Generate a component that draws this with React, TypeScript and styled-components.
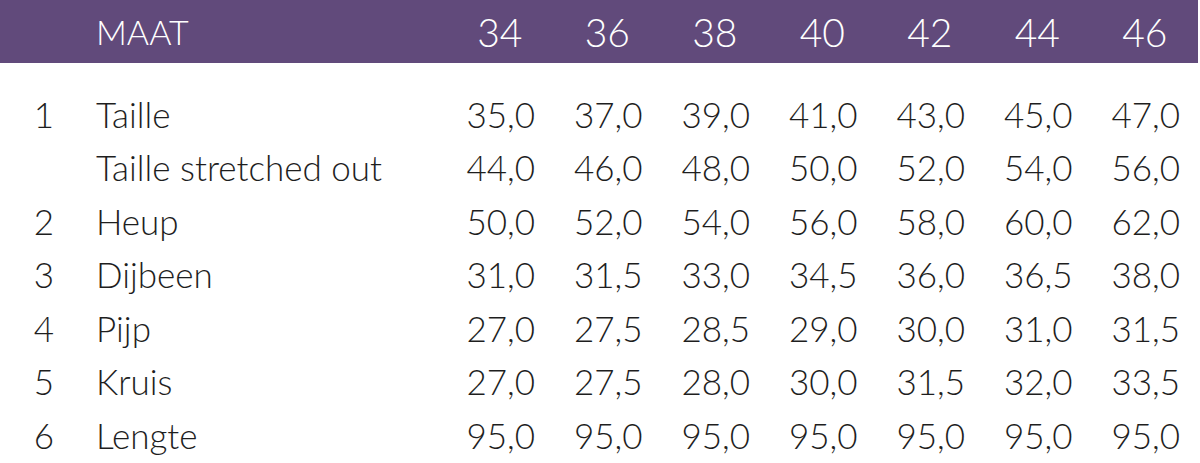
import { createGlobalStyle, styled } from 'styled-components';

const GlobalStyle = createGlobalStyle`
    body {
        margin: 0;
        background: #fff;
        font-family: Lato, 'Open Sans', sans-serif;
        font-weight: 300;
        color: #1e1e1e;
    }
`;

const SIZES = ['34', '36', '38', '40', '42', '44', '46'];

const ROWS: { index: string; label: string; values: string[] }[] = [
    { index: '1', label: 'Taille', values: ['35,0', '37,0', '39,0', '41,0', '43,0', '45,0', '47,0'] },
    { index: '', label: 'Taille stretched out', values: ['44,0', '46,0', '48,0', '50,0', '52,0', '54,0', '56,0'] },
    { index: '2', label: 'Heup', values: ['50,0', '52,0', '54,0', '56,0', '58,0', '60,0', '62,0'] },
    { index: '3', label: 'Dijbeen', values: ['31,0', '31,5', '33,0', '34,5', '36,0', '36,5', '38,0'] },
    { index: '4', label: 'Pijp', values: ['27,0', '27,5', '28,5', '29,0', '30,0', '31,0', '31,5'] },
    { index: '5', label: 'Kruis', values: ['27,0', '27,5', '28,0', '30,0', '31,5', '32,0', '33,5'] },
    { index: '6', label: 'Lengte', values: ['95,0', '95,0', '95,0', '95,0', '95,0', '95,0', '95,0'] },
];

const Table = styled.div`
    width: 1198px;
`;

const Row = styled.div`
    display: grid;
    grid-template-columns: 88px 358px repeat(7, 107.5px);
    align-items: center;
`;

const HeaderRow = styled(Row)`
    height: 63px;
    background: #614a7b;
    color: #fff;
    margin-bottom: 24px;
`;

const Body = styled.div`
    display: flex;
    flex-direction: column;
`;

const BodyRow = styled(Row)`
    height: 53.5px;
    font-size: 35px;
`;

const Index = styled.div`
    text-align: center;
`;

const Label = styled.div<{ $header?: boolean }>`
    padding-left: 8px;
    font-size: ${(p) => (p.$header ? '34px' : '35px')};
    white-space: nowrap;
`;

const Cell = styled.div<{ $header?: boolean }>`
    text-align: center;
    padding-left: ${(p) => (p.$header ? '0' : '2px')};
    font-size: ${(p) => (p.$header ? '39px' : '35px')};
`;

const App = () => {
    return (
        <>
            <GlobalStyle />
            <Table>
                <HeaderRow>
                    <Index />
                    <Label $header>MAAT</Label>
                    {SIZES.map((size) => (
                        <Cell key={size} $header>
                            {size}
                        </Cell>
                    ))}
                </HeaderRow>
                <Body>
                    {ROWS.map((row) => (
                        <BodyRow key={row.label}>
                            <Index>{row.index}</Index>
                            <Label>{row.label}</Label>
                            {row.values.map((value, i) => (
                                <Cell key={i}>{value}</Cell>
                            ))}
                        </BodyRow>
                    ))}
                </Body>
            </Table>
        </>
    );
};

export default App;
